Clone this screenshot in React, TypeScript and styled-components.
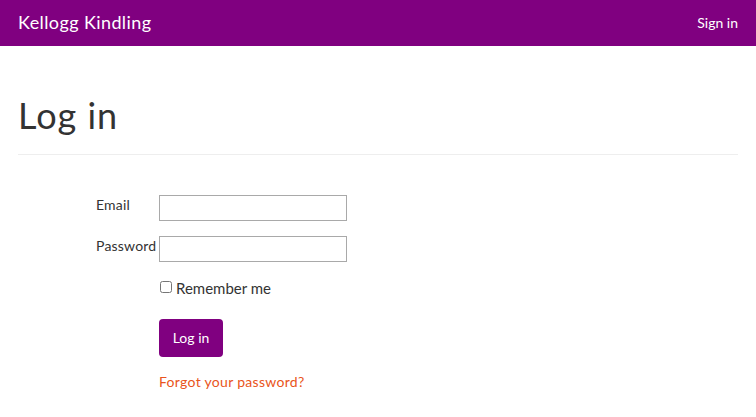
import React from "react";
import styled, { createGlobalStyle } from "styled-components";

const Global = createGlobalStyle`
  html, body { margin: 0; padding: 0; background: #fff; }
  body { font-family: "Lato", "Noto Sans", sans-serif; font-size: 14px; color: #333; }
  * { box-sizing: border-box; }
`;

const NavBar = styled.nav`
  height: 46px;
  background: #800080;
  display: flex;
  align-items: center;
  justify-content: space-between;
  padding: 0 18px;
  color: #fff;
`;

const Brand = styled.a`
  font-size: 18px;
  letter-spacing: 0.4px;
  color: #fff;
  text-decoration: none;
  margin-top: -2px;
`;

const NavLink = styled.a`
  font-size: 14px;
  color: #fff;
  text-decoration: none;
  margin-top: -2px;
`;

const Container = styled.main`
  padding: 0 18px;
`;

const Title = styled.h1`
  margin: 0;
  padding-top: 50px;
  padding-bottom: 18px;
  font-size: 36px;
  letter-spacing: 1px;
  font-weight: 400;
  line-height: 1.1;
  color: #333;
  border-bottom: 1px solid #eee;
`;

const Form = styled.form`
  padding-left: 78px;
  padding-top: 40px;
  display: flex;
  flex-direction: column;
`;

const Row = styled.div`
  display: flex;
  align-items: flex-start;
  margin-bottom: 15px;
`;

const Label = styled.label`
  width: 63px;
  padding-top: 1px;
  font-size: 14px;
  letter-spacing: 0.2px;
  color: #333;
`;

const Input = styled.input`
  width: 188px;
  height: 26px;
  border: 1px solid #a9a9a9;
  margin: 0;
`;

const Indented = styled.div`
  padding-left: 63px;
`;

const CheckLabel = styled.label`
  display: flex;
  align-items: center;
  gap: 3px;
  font-size: 15px;
  margin-top: 2px;
`;

const Check = styled.input`
  margin: -2px 1px 0;
  width: 12px;
  height: 12px;
`;

const Button = styled.button`
  margin-top: 22px;
  height: 38px;
  width: 64px;
  border: none;
  border-radius: 4px;
  background: #800080;
  color: #fff;
  font-family: inherit;
  font-size: 14px;
`;

const Forgot = styled.a`
  display: block;
  margin-top: 16px;
  color: #e95420;
  font-size: 14px;
  letter-spacing: 0.3px;
  text-decoration: none;
`;

export default function App() {
  return (
    <>
      <Global />
      <NavBar>
        <Brand href="#">Kellogg Kindling</Brand>
        <NavLink href="#">Sign in</NavLink>
      </NavBar>
      <Container>
        <Title>Log in</Title>
        <Form>
          <Row>
            <Label>Email</Label>
            <Input type="email" />
          </Row>
          <Row>
            <Label>Password</Label>
            <Input type="password" />
          </Row>
          <Indented>
            <CheckLabel>
              <Check type="checkbox" />
              Remember me
            </CheckLabel>
            <Button type="button">Log in</Button>
            <Forgot href="#">Forgot your password?</Forgot>
          </Indented>
        </Form>
      </Container>
    </>
  );
}
